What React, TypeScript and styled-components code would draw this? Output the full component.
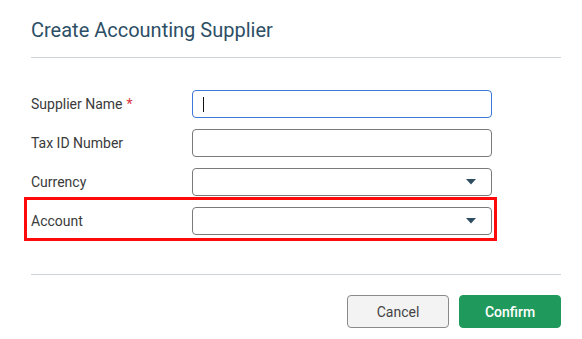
import React, { useState } from 'react'
import styled, { createGlobalStyle } from 'styled-components'

const GlobalStyle = createGlobalStyle`
  html, body {
    margin: 0;
    padding: 0;
    background: #ffffff;
  }
  body {
    font-family: Roboto, "Liberation Sans", Arial, sans-serif;
    -webkit-font-smoothing: antialiased;
  }
`

interface Field {
  label: string
  kind: 'text' | 'select'
  required?: boolean
  focused?: boolean
  highlighted?: boolean
}

const fields: Field[] = [
  { label: 'Supplier Name', kind: 'text', required: true, focused: true },
  { label: 'Tax ID Number', kind: 'text' },
  { label: 'Currency', kind: 'select' },
  { label: 'Account', kind: 'select', highlighted: true },
]

const Caret = () => (
  <svg width="10" height="6" viewBox="0 0 10 6">
    <path d="M0 0 H10 L5 5.5 Z" fill="#2e4d63" />
  </svg>
)

const App: React.FC = () => {
  const [values, setValues] = useState<Record<string, string>>({})

  return (
    <>
      <GlobalStyle />
      <StyledDialog>
        <StyledHeader>Create Accounting Supplier</StyledHeader>
        <StyledForm>
          {fields.map((field) => (
            <StyledRow key={field.label} highlighted={field.highlighted}>
              <StyledLabel>
                {field.label}
                {field.required && <StyledRequired>*</StyledRequired>}
              </StyledLabel>
              {field.kind === 'text' ? (
                <StyledInput
                  focused={field.focused}
                  value={values[field.label] || ''}
                  onChange={(e) => setValues({ ...values, [field.label]: e.target.value })}
                >
                  {field.focused && <StyledCursor />}
                </StyledInput>
              ) : (
                <StyledSelect>
                  <Caret />
                </StyledSelect>
              )}
            </StyledRow>
          ))}
        </StyledForm>
        <StyledFooter>
          <StyledButton variant="secondary">Cancel</StyledButton>
          <StyledButton variant="primary">Confirm</StyledButton>
        </StyledFooter>
      </StyledDialog>
    </>
  )
}

const StyledDialog = styled.div`
  width: 530px;
  padding-left: 31px;
`

const StyledHeader = styled.div`
  font-size: 20px;
  line-height: 24px;
  color: #2d4f66;
  padding: 18px 0 15px;
  border-bottom: 1px solid #cdd4da;
`

const StyledForm = styled.div`
  display: flex;
  flex-direction: column;
  gap: 11px;
  padding: 32px 0 39px;
  border-bottom: 1px solid #cdd4da;
`

interface StyledRowProps {
  highlighted?: boolean
}
const StyledRow = styled.div<StyledRowProps>`
  position: relative;
  display: grid;
  grid-template-columns: 161px 300px;
  align-items: center;
  height: 28px;
  &::after {
    content: "";
    display: ${(props) => (props.highlighted ? 'block' : 'none')};
    position: absolute;
    left: -7px;
    top: -10px;
    width: 473px;
    height: 44px;
    border: 3px solid #ff0a0a;
    box-sizing: border-box;
  }
`

const StyledLabel = styled.div`
  font-size: 14px;
  color: #3a3a3a;
`

const StyledRequired = styled.span`
  color: #d9363e;
  margin-left: 4px;
`

interface StyledInputProps {
  focused?: boolean
  value?: string
  onChange?: (e: React.ChangeEvent<HTMLInputElement>) => void
}
const StyledInput = styled.div<StyledInputProps>`
  box-sizing: border-box;
  height: 28px;
  border: 1px solid ${(props) => (props.focused ? '#3b78d8' : '#7a7a7a')};
  border-radius: 4px;
  display: flex;
  align-items: center;
  padding-left: 10px;
`

const StyledCursor = styled.span`
  width: 1px;
  height: 15px;
  background: #111;
`

const StyledSelect = styled.div`
  box-sizing: border-box;
  height: 28px;
  border: 1px solid #7a7a7a;
  border-radius: 4px;
  display: flex;
  align-items: center;
  justify-content: flex-end;
  padding-right: 15px;
`

const StyledFooter = styled.div`
  display: flex;
  justify-content: flex-end;
  gap: 10px;
  padding-top: 20px;
`

interface StyledButtonProps {
  variant: 'primary' | 'secondary'
}
const StyledButton = styled.button<StyledButtonProps>`
  box-sizing: border-box;
  width: 102px;
  height: 33px;
  border-radius: 4px;
  font-family: Roboto, "Liberation Sans", Arial, sans-serif;
  font-size: 14px;
  cursor: pointer;
  border: 1px solid ${(props) => (props.variant === 'primary' ? '#209a5c' : '#8a8a8a')};
  background: ${(props) => (props.variant === 'primary' ? '#209a5c' : '#f3f3f3')};
  color: ${(props) => (props.variant === 'primary' ? '#ffffff' : '#444444')};
  font-weight: ${(props) => (props.variant === 'primary' ? 500 : 400)};
`

export default App
